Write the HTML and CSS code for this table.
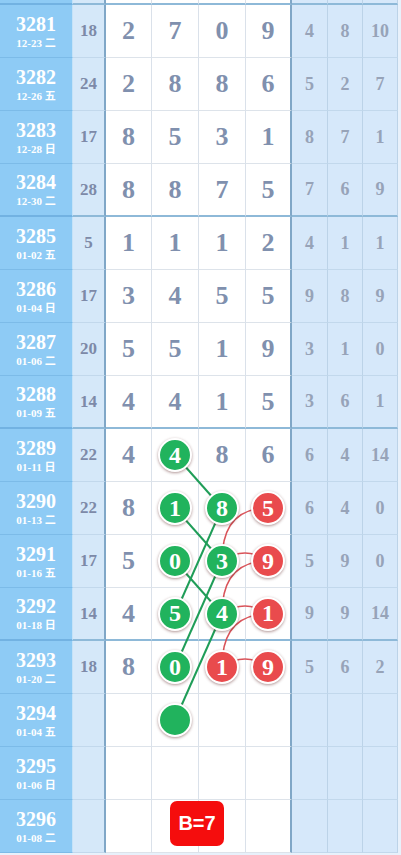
FILE: index.html
```html
<!DOCTYPE html>
<html lang="zh">
  <head>
    <meta charset="UTF-8" />
    <meta name="viewport" content="width=device-width, initial-scale=1.0" />
    <title>走势图</title>
    <link rel="stylesheet" href="styles.css">
  </head>
  <body>
    <div class="board">
      <div class="row stub end">
        <div class="cell issue"></div><div class="cell sum"></div>
        <div class="cell num"></div><div class="cell num"></div><div class="cell num"></div><div class="cell num last"></div>
        <div class="cell dist"></div><div class="cell dist"></div><div class="cell dist"></div>
      </div>

      <div class="row">
        <div class="cell issue"><b>3281</b><span>12-23 二</span></div><div class="cell sum">18</div>
        <div class="cell num">2</div><div class="cell num">7</div><div class="cell num">0</div><div class="cell num last">9</div>
        <div class="cell dist">4</div><div class="cell dist">8</div><div class="cell dist">10</div>
      </div>
      <div class="row">
        <div class="cell issue"><b>3282</b><span>12-26 五</span></div><div class="cell sum">24</div>
        <div class="cell num">2</div><div class="cell num">8</div><div class="cell num">8</div><div class="cell num last">6</div>
        <div class="cell dist">5</div><div class="cell dist">2</div><div class="cell dist">7</div>
      </div>
      <div class="row">
        <div class="cell issue"><b>3283</b><span>12-28 日</span></div><div class="cell sum">17</div>
        <div class="cell num">8</div><div class="cell num">5</div><div class="cell num">3</div><div class="cell num last">1</div>
        <div class="cell dist">8</div><div class="cell dist">7</div><div class="cell dist">1</div>
      </div>
      <div class="row end">
        <div class="cell issue"><b>3284</b><span>12-30 二</span></div><div class="cell sum">28</div>
        <div class="cell num">8</div><div class="cell num">8</div><div class="cell num">7</div><div class="cell num last">5</div>
        <div class="cell dist">7</div><div class="cell dist">6</div><div class="cell dist">9</div>
      </div>

      <div class="row">
        <div class="cell issue"><b>3285</b><span>01-02 五</span></div><div class="cell sum">5</div>
        <div class="cell num">1</div><div class="cell num">1</div><div class="cell num">1</div><div class="cell num last">2</div>
        <div class="cell dist">4</div><div class="cell dist">1</div><div class="cell dist">1</div>
      </div>
      <div class="row">
        <div class="cell issue"><b>3286</b><span>01-04 日</span></div><div class="cell sum">17</div>
        <div class="cell num">3</div><div class="cell num">4</div><div class="cell num">5</div><div class="cell num last">5</div>
        <div class="cell dist">9</div><div class="cell dist">8</div><div class="cell dist">9</div>
      </div>
      <div class="row">
        <div class="cell issue"><b>3287</b><span>01-06 二</span></div><div class="cell sum">20</div>
        <div class="cell num">5</div><div class="cell num">5</div><div class="cell num">1</div><div class="cell num last">9</div>
        <div class="cell dist">3</div><div class="cell dist">1</div><div class="cell dist">0</div>
      </div>
      <div class="row end">
        <div class="cell issue"><b>3288</b><span>01-09 五</span></div><div class="cell sum">14</div>
        <div class="cell num">4</div><div class="cell num">4</div><div class="cell num">1</div><div class="cell num last">5</div>
        <div class="cell dist">3</div><div class="cell dist">6</div><div class="cell dist">1</div>
      </div>

      <div class="row">
        <div class="cell issue"><b>3289</b><span>01-11 日</span></div><div class="cell sum">22</div>
        <div class="cell num">4</div><div class="cell num"><i class="ball green">4</i></div><div class="cell num">8</div><div class="cell num last">6</div>
        <div class="cell dist">6</div><div class="cell dist">4</div><div class="cell dist">14</div>
      </div>
      <div class="row">
        <div class="cell issue"><b>3290</b><span>01-13 二</span></div><div class="cell sum">22</div>
        <div class="cell num">8</div><div class="cell num"><i class="ball green">1</i></div><div class="cell num"><i class="ball green">8</i></div><div class="cell num last"><i class="ball red">5</i></div>
        <div class="cell dist">6</div><div class="cell dist">4</div><div class="cell dist">0</div>
      </div>
      <div class="row">
        <div class="cell issue"><b>3291</b><span>01-16 五</span></div><div class="cell sum">17</div>
        <div class="cell num">5</div><div class="cell num"><i class="ball green">0</i></div><div class="cell num"><i class="ball green">3</i></div><div class="cell num last"><i class="ball red">9</i></div>
        <div class="cell dist">5</div><div class="cell dist">9</div><div class="cell dist">0</div>
      </div>
      <div class="row end">
        <div class="cell issue"><b>3292</b><span>01-18 日</span></div><div class="cell sum">14</div>
        <div class="cell num">4</div><div class="cell num"><i class="ball green">5</i></div><div class="cell num"><i class="ball green">4</i></div><div class="cell num last"><i class="ball red">1</i></div>
        <div class="cell dist">9</div><div class="cell dist">9</div><div class="cell dist">14</div>
      </div>

      <div class="row">
        <div class="cell issue"><b>3293</b><span>01-20 二</span></div><div class="cell sum">18</div>
        <div class="cell num">8</div><div class="cell num"><i class="ball green">0</i></div><div class="cell num"><i class="ball red">1</i></div><div class="cell num last"><i class="ball red">9</i></div>
        <div class="cell dist">5</div><div class="cell dist">6</div><div class="cell dist">2</div>
      </div>
      <div class="row">
        <div class="cell issue"><b>3294</b><span>01-04 五</span></div><div class="cell sum"></div>
        <div class="cell num"></div><div class="cell num"><i class="ball green"></i></div><div class="cell num"></div><div class="cell num last"></div>
        <div class="cell dist"></div><div class="cell dist"></div><div class="cell dist"></div>
      </div>
      <div class="row">
        <div class="cell issue"><b>3295</b><span>01-06 日</span></div><div class="cell sum"></div>
        <div class="cell num"></div><div class="cell num"></div><div class="cell num"></div><div class="cell num last"></div>
        <div class="cell dist"></div><div class="cell dist"></div><div class="cell dist"></div>
      </div>
      <div class="row">
        <div class="cell issue"><b>3296</b><span>01-08 二</span></div><div class="cell sum"></div>
        <div class="cell num"></div><div class="cell num"></div><div class="cell num"></div><div class="cell num last"></div>
        <div class="cell dist"></div><div class="cell dist"></div><div class="cell dist"></div>
      </div>

      <!-- trend lines between the balls -->
      <svg class="trend" width="401" height="855" viewBox="0 0 401 855">
        <g stroke="#1f9d58" stroke-width="2" fill="none">
          <line x1="175" y1="455" x2="222" y2="508" />
          <line x1="175" y1="508" x2="222" y2="561" />
          <line x1="222" y1="508" x2="175" y2="614" />
          <line x1="175" y1="561" x2="222" y2="614" />
          <line x1="222" y1="561" x2="175" y2="667" />
          <line x1="222" y1="614" x2="175" y2="720" />
        </g>
        <g stroke="#d9545a" stroke-width="1.6" fill="none">
          <path d="M268,508 Q222,508 222,561" />
          <path d="M268,561 Q245,545 222,561" />
          <path d="M268,561 Q222,561 222,614" />
          <path d="M268,614 Q245,598 222,614" />
          <path d="M268,614 Q222,614 222,667" />
          <path d="M268,667 Q245,651 222,667" />
        </g>
      </svg>

      <div class="badge">B=7</div>
    </div>
  </body>
</html>
```

FILE: styles.css
```css
body {
  margin: 0;
  background-color: #e8f1fb;
  font-family: "Liberation Serif", "Noto Sans CJK SC", serif;
}
.board {
  position: relative;
  width: 401px;
  height: 855px;
  overflow: hidden;
}
.row {
  display: grid;
  grid-template-columns: 73px 33px 46px 47px 47px 46px 36px 35px 35px;
  height: 53px;
}
.row.stub {
  height: 5px;
}
.cell {
  box-sizing: border-box;
  display: flex;
  align-items: center;
  justify-content: center;
  border-bottom: 1px solid #dde3ea;
  font-weight: bold;
}
.issue {
  flex-direction: column;
  background: #8ecbf5;
  color: #fff;
  border-right: 1px solid #c4e2f8;
  border-bottom-color: #7cbbe8;
}
.issue b {
  font-size: 20px;
  line-height: 20px;
}
.issue span {
  margin-top: 3px;
  font-size: 11px;
  line-height: 12px;
  font-family: "Liberation Serif", "Noto Sans CJK SC", serif;
}
.sum {
  background: #d5e8f9;
  color: #7d8aa8;
  font-size: 17px;
  border-right: 2px solid #80a7c7;
  border-bottom-color: #c2d8ec;
}
.num {
  background: #fff;
  color: #8090ae;
  font-size: 26px;
  border-right: 1px solid #dae1ea;
}
.num.last {
  border-right: 2px solid #80a7c7;
}
.dist {
  background: #d6e8fa;
  color: #97a3b8;
  font-size: 18px;
  border-right: 1px solid #bcd3e8;
  border-bottom-color: #c2d8ec;
}
.row.end .cell {
  border-bottom: 2px solid #8eb9d8;
}
.row.end .issue {
  border-bottom-color: #72b2e2;
}
.ball {
  position: relative;
  z-index: 2;
  width: 30px;
  height: 30px;
  border: 2px solid #fff;
  border-radius: 50%;
  display: flex;
  align-items: center;
  justify-content: center;
  color: #fff;
  font-style: normal;
  font-size: 24px;
  box-shadow: 0 1px 3px rgba(80, 20, 20, 0.45);
}
.ball.green {
  background: #21b35d;
}
.ball.red {
  background: #e94b4d;
}
.trend {
  position: absolute;
  top: 0;
  left: 0;
  z-index: 1;
  pointer-events: none;
}
.badge {
  position: absolute;
  left: 170px;
  top: 801px;
  z-index: 3;
  width: 54px;
  height: 45px;
  border-radius: 7px;
  background: #f50d0d;
  color: #fff;
  font-family: "Liberation Sans", Arial, sans-serif;
  font-weight: bold;
  font-size: 20px;
  display: flex;
  align-items: center;
  justify-content: center;
}
```
